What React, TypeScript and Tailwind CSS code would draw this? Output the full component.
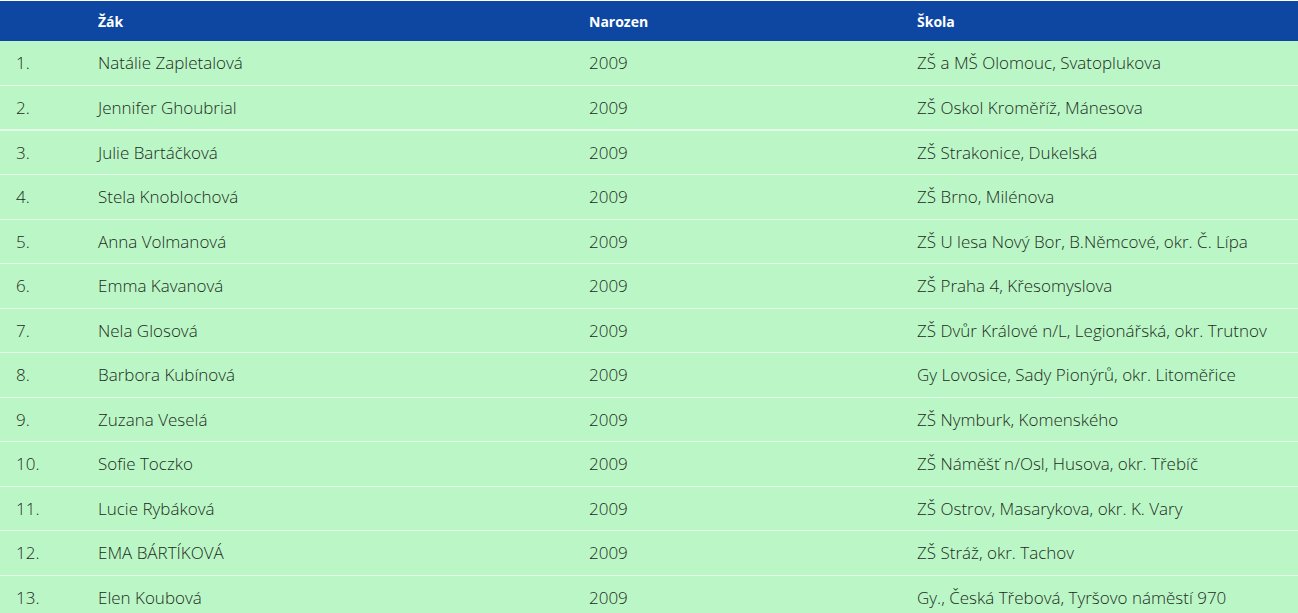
import React from 'react';

const rows: [string, string, string, string][] = [
  ['1.', 'Natálie Zapletalová', '2009', 'ZŠ a MŠ Olomouc, Svatoplukova'],
  ['2.', 'Jennifer Ghoubrial', '2009', 'ZŠ Oskol Kroměříž, Mánesova'],
  ['3.', 'Julie Bartáčková', '2009', 'ZŠ Strakonice, Dukelská'],
  ['4.', 'Stela Knoblochová', '2009', 'ZŠ Brno, Milénova'],
  ['5.', 'Anna Volmanová', '2009', 'ZŠ U lesa Nový Bor, B.Němcové, okr. Č. Lípa'],
  ['6.', 'Emma Kavanová', '2009', 'ZŠ Praha 4, Křesomyslova'],
  ['7.', 'Nela Glosová', '2009', 'ZŠ Dvůr Králové n/L, Legionářská, okr. Trutnov'],
  ['8.', 'Barbora Kubínová', '2009', 'Gy Lovosice, Sady Pionýrů, okr. Litoměřice'],
  ['9.', 'Zuzana Veselá', '2009', 'ZŠ Nymburk, Komenského'],
  ['10.', 'Sofie Toczko', '2009', 'ZŠ Náměšť n/Osl, Husova, okr. Třebíč'],
  ['11.', 'Lucie Rybáková', '2009', 'ZŠ Ostrov, Masarykova, okr. K. Vary'],
  ['12.', 'EMA BÁRTÍKOVÁ', '2009', 'ZŠ Stráž, okr. Tachov'],
  ['13.', 'Elen Koubová', '2009', 'Gy., Česká Třebová, Tyršovo náměstí 970'],
];

export default function App() {
  return (
    <div className="w-[1298px] h-[613px] overflow-hidden bg-white pt-px font-['Open_Sans',sans-serif]">
      <table className="w-full border-collapse">
        <thead>
          <tr className="bg-[#0d47a1] text-white text-[14px] font-semibold h-[40px]">
            <th className="w-[82px]"></th>
            <th className="text-left pl-[16px] w-[491px]">Žák</th>
            <th className="text-left pl-[16px] w-[328px]">Narozen</th>
            <th className="text-left pl-[16px]">Škola</th>
          </tr>
        </thead>
        <tbody>
          {rows.map(([n, name, year, school], i) => (
            <tr key={n} className={`bg-[#bbf7c6] text-[#1e2a22] text-[17px] font-light h-[44.5px] ${i === 1 ? 'border-b-2' : 'border-b'} border-[#e4fbe8]`}>
              <td className="pl-[16px]">{n}</td>
              <td className="pl-[16px]">{name}</td>
              <td className="pl-[16px]">{year}</td>
              <td className="pl-[16px]">{school}</td>
            </tr>
          ))}
        </tbody>
      </table>
    </div>
  );
}
